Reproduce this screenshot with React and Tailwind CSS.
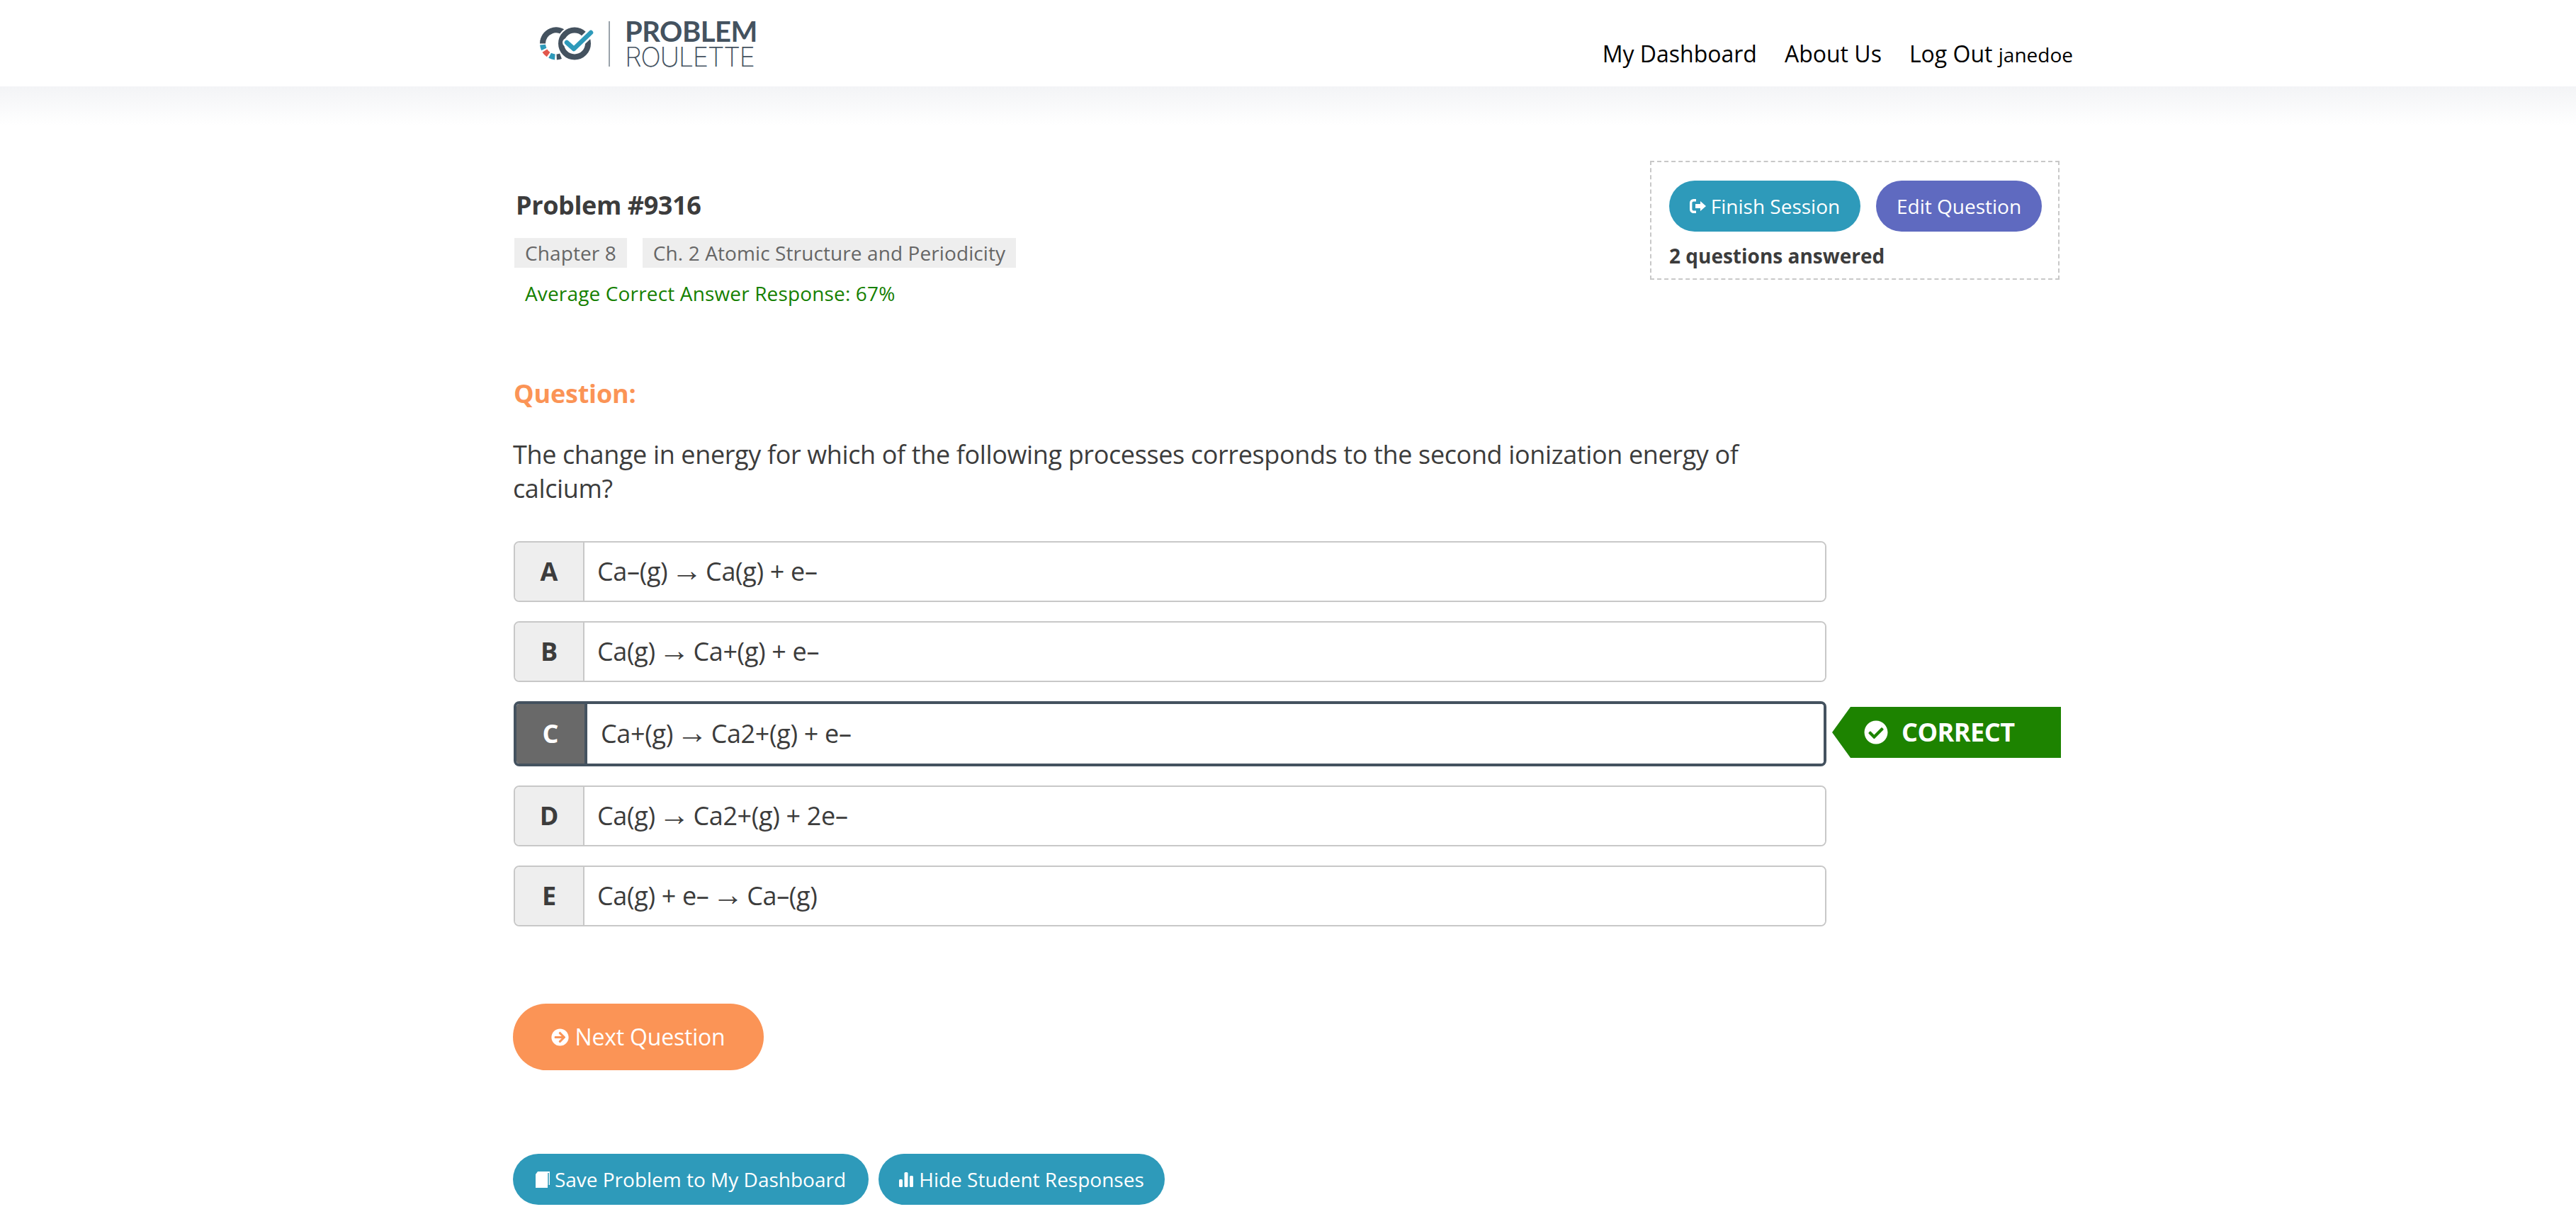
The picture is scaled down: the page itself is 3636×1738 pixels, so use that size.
import React from "react";
import { FaArrowCircleRight, FaCheckCircle } from "react-icons/fa";

const options = [
  { letter: "A", before: "Ca–(g)", after: "Ca(g) + e–" },
  { letter: "B", before: "Ca(g)", after: "Ca+(g) + e–" },
  { letter: "C", before: "Ca+(g)", after: "Ca2+(g) + e–", correct: true },
  { letter: "D", before: "Ca(g)", after: "Ca2+(g) + 2e–" },
  { letter: "E", before: "Ca(g) + e–", after: "Ca–(g)" },
];

const LogoMark = () => (
  <svg width="80" height="52" viewBox="0 0 80 52" fill="none">
    <path d="M6 25.5A19 19 0 0 1 39 12.5" stroke="#44525f" strokeWidth="8" />
    <path d="M6.07 27.2A19 19 0 0 0 7.8 33.5" stroke="#2e9aba" strokeWidth="8" />
    <path d="M8.9 35.6A19 19 0 0 0 14.1 41.1" stroke="#e2574c" strokeWidth="8" />
    <path d="M16.1 42.3A19 19 0 0 0 23.3 44.4" stroke="#2e9aba" strokeWidth="8" />
    <path d="M25.7 44.5A19 19 0 0 0 31.5 43.3" stroke="#44525f" strokeWidth="8" />
    <circle cx="51" cy="25.5" r="19" stroke="#ffffff" strokeWidth="12" />
    <circle cx="51" cy="25.5" r="19" stroke="#44525f" strokeWidth="8" />
    <path d="M40 24L50 33L74 10" stroke="#ffffff" strokeWidth="12" strokeLinecap="round" strokeLinejoin="round" />
    <path d="M40 24L50 33L74 10" stroke="#2e9aba" strokeWidth="6.5" strokeLinecap="round" strokeLinejoin="round" />
  </svg>
);

const FinishIcon = () => (
  <svg width="23" height="20" viewBox="0 0 23 20" fill="none">
    <path d="M9 1.7H5.5a3.8 3.8 0 0 0-3.8 3.8v9a3.8 3.8 0 0 0 3.8 3.8H9" stroke="#ffffff" strokeWidth="3.4" />
    <path d="M8 7H15V3L23 10L15 17V13H8Z" fill="#ffffff" />
  </svg>
);

const BookIcon = () => (
  <svg width="20" height="23" viewBox="0 0 20 23" fill="none">
    <path d="M0 4L3 0H20V19H17V23H0Z" fill="#ffffff" />
    <path d="M2 3.5H16.5V19H2Z" fill="#ffffff" />
    <path d="M18 2V20" stroke="#2e9aba" strokeWidth="1.5" />
  </svg>
);

const BarsIcon = () => (
  <svg width="20" height="21" viewBox="0 0 20 21" fill="#ffffff">
    <rect x="0" y="10" width="5" height="11" rx="1.5" />
    <rect x="7.5" y="0" width="5" height="21" rx="1.5" />
    <rect x="15" y="5" width="5" height="16" rx="1.5" />
  </svg>
);

const OptionText = ({ option }) => (
  <span className="whitespace-pre tracking-[-0.35px]">
    {option.before}{" "}
    <span className="mx-[-4px] font-['Liberation_Sans',sans-serif] text-[44px] leading-none">→</span>{" "}
    {option.after}
  </span>
);

const App = () => {
  return (
    <div className="min-h-[1738px] bg-white font-['Open_Sans',sans-serif] text-[#3c3c3c]">
      <header className="h-[122px] bg-white">
        <div className="mx-auto flex h-full w-[2216px] items-start justify-between pl-[50px]">
          <div className="flex items-start pt-[30px]">
            <div className="mt-[6px]">
              <LogoMark />
            </div>
            <div className="ml-[19px] h-[64px] w-[2px] bg-[#9aa3ab]" />
            <div className="ml-[21px] font-['Lato',sans-serif] text-[#44525f]">
              <div className="h-[37px] text-[40px] leading-[29px] font-bold tracking-[-0.5px]">PROBLEM</div>
              <div className="h-[27px] text-[38px] leading-[27px] font-['Inter',sans-serif] font-extralight tracking-[-1.4px]">ROULETTE</div>
            </div>
          </div>
          <nav className="flex items-baseline gap-[39px] pt-[54px] text-[32px] leading-[44px] text-black">
            <a>My Dashboard</a>
            <a>About Us</a>
            <a>
              Log Out <span className="text-[28px]">janedoe</span>
            </a>
          </nav>
        </div>
      </header>
      <div className="h-[56px] bg-gradient-to-b from-[#f3f4f6] to-white" />

      <main className="mx-auto w-[2184px] pt-[49px]">
        <div className="flex items-start justify-between">
          <div className="pt-[39px]">
            <h1 className="pl-[2px] text-[36px] leading-[48px] font-bold tracking-[-0.4px]">Problem #9316</h1>
            <div className="mt-[22px] flex gap-[22px] text-[28px] leading-[42px] tracking-[0.1px] text-[#666666]">
              <span className="bg-[#eeeeee] px-[15px]">Chapter 8</span>
              <span className="bg-[#eeeeee] px-[15px]">Ch. 2 Atomic Structure and Periodicity</span>
            </div>
            <div className="mt-[16px] pl-[15px] text-[28px] leading-[40px] tracking-[0.15px] text-[#158000]">
              Average Correct Answer Response: 67%
            </div>
          </div>
          <div className="mr-[3px] h-[168px] w-[578px] border-2 border-dashed border-[#c8c8c8] pt-[26px] pl-[25px]">
            <div className="flex gap-[22px] text-[28px] text-white">
              <button className="flex h-[72px] w-[270px] items-center justify-center gap-[7px] rounded-[36px] bg-[#2e9aba]">
                <FinishIcon />
                Finish Session
              </button>
              <button className="flex h-[72px] w-[234px] items-center justify-center rounded-[36px] bg-[#5f6ac0]">
                Edit Question
              </button>
            </div>
            <p className="mt-[16px] text-[28px] leading-[36px] font-bold">2 questions answered</p>
          </div>
        </div>

        <h2 className="mt-[98px] -ml-px text-[36px] leading-[48px] font-bold tracking-[-0.2px] text-[#fb9456]">Question:</h2>
        <p className="mt-[38px] -ml-[2px] w-[1853px] text-[36px] leading-[48px] tracking-[-0.37px]">
          The change in energy for which of the following processes corresponds to the second ionization energy of calcium?
        </p>

        <div className="mt-[50px] -ml-px flex w-[2185px] flex-col gap-[27px]">
          {options.map((option) => (
            <div key={option.letter} className="flex items-center">
              {option.correct ? (
                <div className="flex h-[92px] w-[1853px] overflow-hidden rounded-[8px] border-4 border-[#44525f] text-[36px]">
                  <div className="flex w-[100px] items-center justify-center border-r-4 border-[#44525f] bg-[#696969] font-bold text-white">
                    {option.letter}
                  </div>
                  <div className="flex flex-1 items-center bg-white pl-[19px]">
                    <OptionText option={option} />
                  </div>
                </div>
              ) : (
                <div className="flex h-[86px] w-[1853px] overflow-hidden rounded-[8px] border-2 border-[#c8c8c8] text-[36px]">
                  <div className="flex w-[98px] items-center justify-center border-r-2 border-[#c8c8c8] bg-[#eeeeee] font-bold">
                    {option.letter}
                  </div>
                  <div className="flex flex-1 items-center bg-white pl-[18px]">
                    <OptionText option={option} />
                  </div>
                </div>
              )}
              {option.correct && (
                <div className="mb-[4px] ml-[8px] flex h-[72px] w-[323px] items-center bg-[#1d8300] pl-[45px] text-[36px] font-bold tracking-[-0.5px] text-white [clip-path:polygon(0_50%,26px_0,100%_0,100%_100%,26px_100%)]">
                  <FaCheckCircle className="h-[34px] w-[34px]" />
                  <span className="ml-[19px]">CORRECT</span>
                </div>
              )}
            </div>
          ))}
        </div>

        <button className="mt-[109px] -ml-[2px] flex h-[94px] w-[354px] items-center justify-center gap-[8px] rounded-[47px] bg-[#fb9456] text-[32px] tracking-[-0.2px] text-white">
          <FaArrowCircleRight className="h-[25px] w-[25px]" />
          Next Question
        </button>

        <div className="mt-[118px] -ml-[2px] flex gap-[14px] text-[28px] text-white">
          <button className="flex h-[72px] w-[502px] items-center justify-center gap-[7px] rounded-[36px] bg-[#2e9aba]">
            <BookIcon />
            Save Problem to My Dashboard
          </button>
          <button className="flex h-[72px] w-[404px] items-center justify-center gap-[8px] rounded-[36px] bg-[#2e9aba]">
            <BarsIcon />
            Hide Student Responses
          </button>
        </div>
      </main>
    </div>
  );
};

export default App;
